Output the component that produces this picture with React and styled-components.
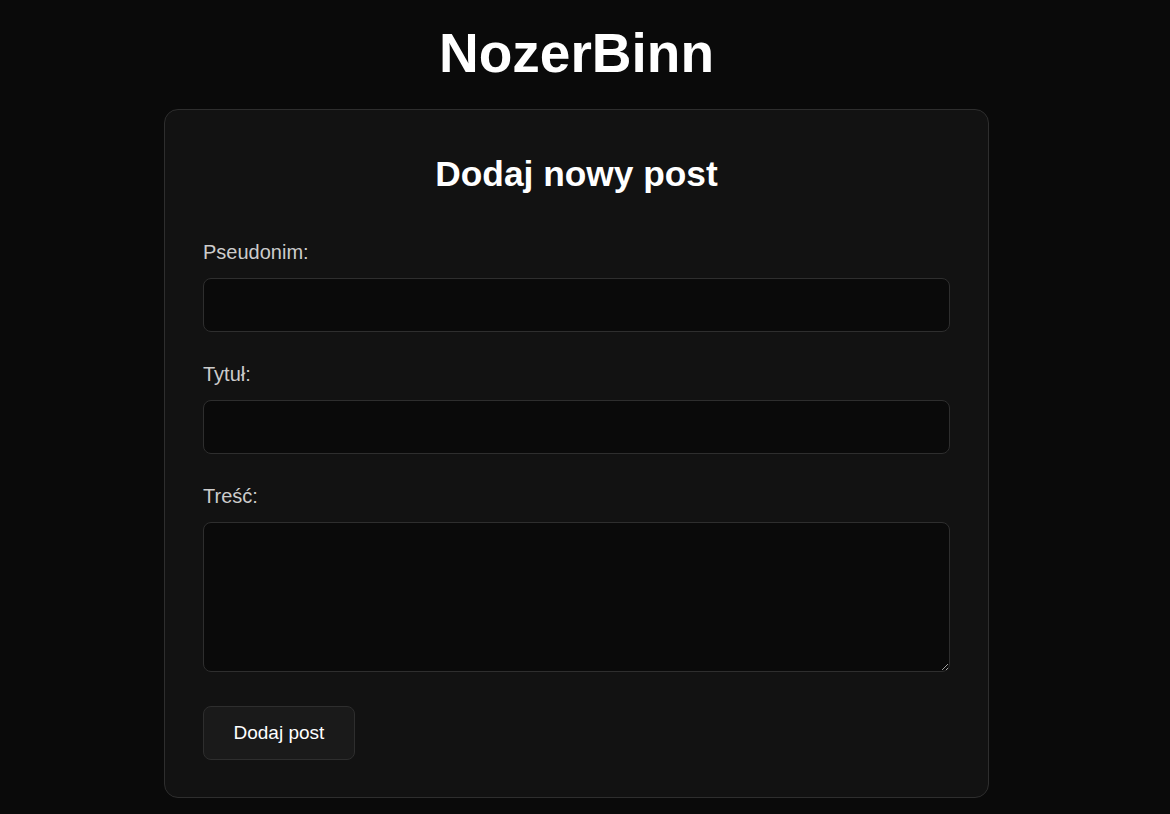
import styled, { createGlobalStyle } from "styled-components"

const GlobalStyle = createGlobalStyle`
    * {
        box-sizing: border-box;
    }
    body {
        margin: 0;
        background: #0a0a0a;
        color: #fff;
        font-family: "Liberation Sans", Arial, sans-serif;
    }
`

export default function App() {
    return (
        <>
            <GlobalStyle />
            <Page>
                <Logo>NozerBinn</Logo>
                <Card>
                    <CardTitle>Dodaj nowy post</CardTitle>
                    <form onSubmit={(e) => e.preventDefault()}>
                        <Field>
                            <Label htmlFor="nick">Pseudonim:</Label>
                            <Input id="nick" type="text" />
                        </Field>
                        <Field>
                            <Label htmlFor="title">Tytuł:</Label>
                            <Input id="title" type="text" />
                        </Field>
                        <Field>
                            <Label htmlFor="content">Treść:</Label>
                            <TextArea id="content" />
                        </Field>
                        <SubmitButton type="submit">Dodaj post</SubmitButton>
                    </form>
                </Card>
            </Page>
        </>
    )
}

const Page = styled.div`
    display: flex;
    flex-direction: column;
    align-items: center;
    padding: 22px 17px 40px 0;
`

const Logo = styled.h1`
    margin: 0 0 24px;
    font-size: 55px;
    line-height: 63px;
    font-weight: 700;
    color: #fff;
`

const Card = styled.div`
    width: 825px;
    padding: 38px 38px 37px;
    background: #121212;
    border: 1px solid #2e2e2e;
    border-radius: 14px;
`

const CardTitle = styled.h2`
    margin: 0 0 41px;
    font-size: 35.3px;
    line-height: 52px;
    font-weight: 700;
    text-align: center;
    color: #fff;
`

const Field = styled.div`
    display: flex;
    flex-direction: column;
    margin-bottom: 31px;
`

const Label = styled.label`
    font-size: 20px;
    line-height: 22px;
    color: #cccccc;
    margin-bottom: 15px;
`

const Input = styled.input`
    display: block;
    width: 100%;
    height: 54px;
    padding: 0 14px;
    background: #0a0a0a;
    border: 1px solid #2e2e2e;
    border-radius: 8px;
    color: #fff;
    font-family: inherit;
    font-size: 18px;
    outline: none;
`

const TextArea = styled.textarea`
    display: block;
    width: 100%;
    height: 150px;
    padding: 14px;
    background: #0a0a0a;
    border: 1px solid #2e2e2e;
    border-radius: 8px;
    color: #fff;
    font-family: inherit;
    font-size: 18px;
    outline: none;
    resize: vertical;
`

const SubmitButton = styled.button`
    display: block;
    margin-top: 34px;
    height: 54px;
    padding: 0 29.5px;
    background: #1a1a1a;
    border: 1px solid #2e2e2e;
    border-radius: 8px;
    color: #fff;
    font-family: inherit;
    font-size: 19px;
    cursor: pointer;
`
